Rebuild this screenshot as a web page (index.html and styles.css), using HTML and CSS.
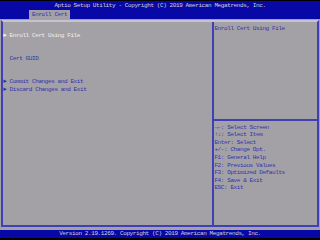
FILE: index.html
```html
<!DOCTYPE html>
<html>
<head>
  <meta name="viewport" content="width=device-width, initial-scale=1">
  <link rel="stylesheet" href="styles.css">
</head>
<body>
  <div class="screen">
    <!-- top bar with title and tab -->
    <div class="title-bar">
      <div class="bar-line title">Aptio Setup Utility - Copyright (C) 2019 American Megatrends, Inc.</div>
      <div class="bar-line tabs"><span class="tab">Enroll Cert</span></div>
    </div>

    <div class="main">
      <div class="frame">
        <div class="menu">
          <div class="line selected"><span class="arrow">►</span> Enroll Cert Using File</div>
          <div class="line"></div>
          <div class="line"></div>
          <div class="line">  Cert GUID</div>
          <div class="line"></div>
          <div class="line"></div>
          <div class="line"><span class="arrow">►</span> Commit Changes and Exit</div>
          <div class="line"><span class="arrow">►</span> Discard Changes and Exit</div>
        </div>
        <div class="help">
          <div class="help-top">
            <div class="line">Enroll Cert Using File</div>
          </div>
          <div class="keys">
            <div class="line">→←: Select Screen</div>
            <div class="line">↑↓: Select Item</div>
            <div class="line">Enter: Select</div>
            <div class="line">+/-: Change Opt.</div>
            <div class="line">F1: General Help</div>
            <div class="line">F2: Previous Values</div>
            <div class="line">F3: Optimized Defaults</div>
            <div class="line">F4: Save &amp; Exit</div>
            <div class="line">ESC: Exit</div>
          </div>
        </div>
      </div>
    </div>

    <div class="footer">Version 2.19.1269. Copyright (C) 2019 American Megatrends, Inc.</div>
  </div>
</body>
</html>
```

FILE: styles.css
```css
/* Base: one text cell is 3.2px wide, one row 7.6px high */
body {
  margin: 0;
  background: #000;
  font-family: "Liberation Mono", "DejaVu Sans Mono", monospace;
  font-size: 6px;
  letter-spacing: -0.4px;
  line-height: 7.6px;
  color: #3232ae;
}
.screen {
  padding-top: 1px;
}
.line {
  height: 7.6px;
  white-space: pre;
}
/* Blue title bar */
.title-bar {
  background: #0808a6;
  color: #cfcfd4;
}
.bar-line {
  height: 9px;
  line-height: 9px;
  white-space: pre;
}
.title {
  text-align: center;
}
.tabs {
  padding-left: 28.8px;
}
.tab {
  display: inline-block;
  height: 9px;
  padding: 0 3.2px;
  background: #a3a1a6;
  color: #3232ae;
}
/* Gray work area with the frame */
.main {
  background: #a3a1a6;
  height: 210.5px;
  padding: 1px 1px 2.5px;
  box-sizing: border-box;
}
.frame {
  display: flex;
  height: 207px;
  box-sizing: border-box;
  border: 2px solid #4040b6;
  border-top-color: #c4c3d2;
}
.menu {
  width: 208.8px;
  padding: 10.4px 0 0 0.2px;
  box-sizing: border-box;
}
.selected {
  color: #f0f0f0;
}
.help {
  flex: 1;
  border-left: 2px solid #4040b6;
}
.help-top {
  height: 98.8px;
  padding: 2.8px 0 0 0.6px;
  box-sizing: border-box;
  border-bottom: 2px solid #4040b6;
}
.keys {
  padding: 2.8px 0 0 0.6px;
}
/* Blue footer */
.footer {
  height: 8px;
  line-height: 8px;
  white-space: pre;
  background: #0808a6;
  color: #cfcfd4;
  text-align: center;
}
```
